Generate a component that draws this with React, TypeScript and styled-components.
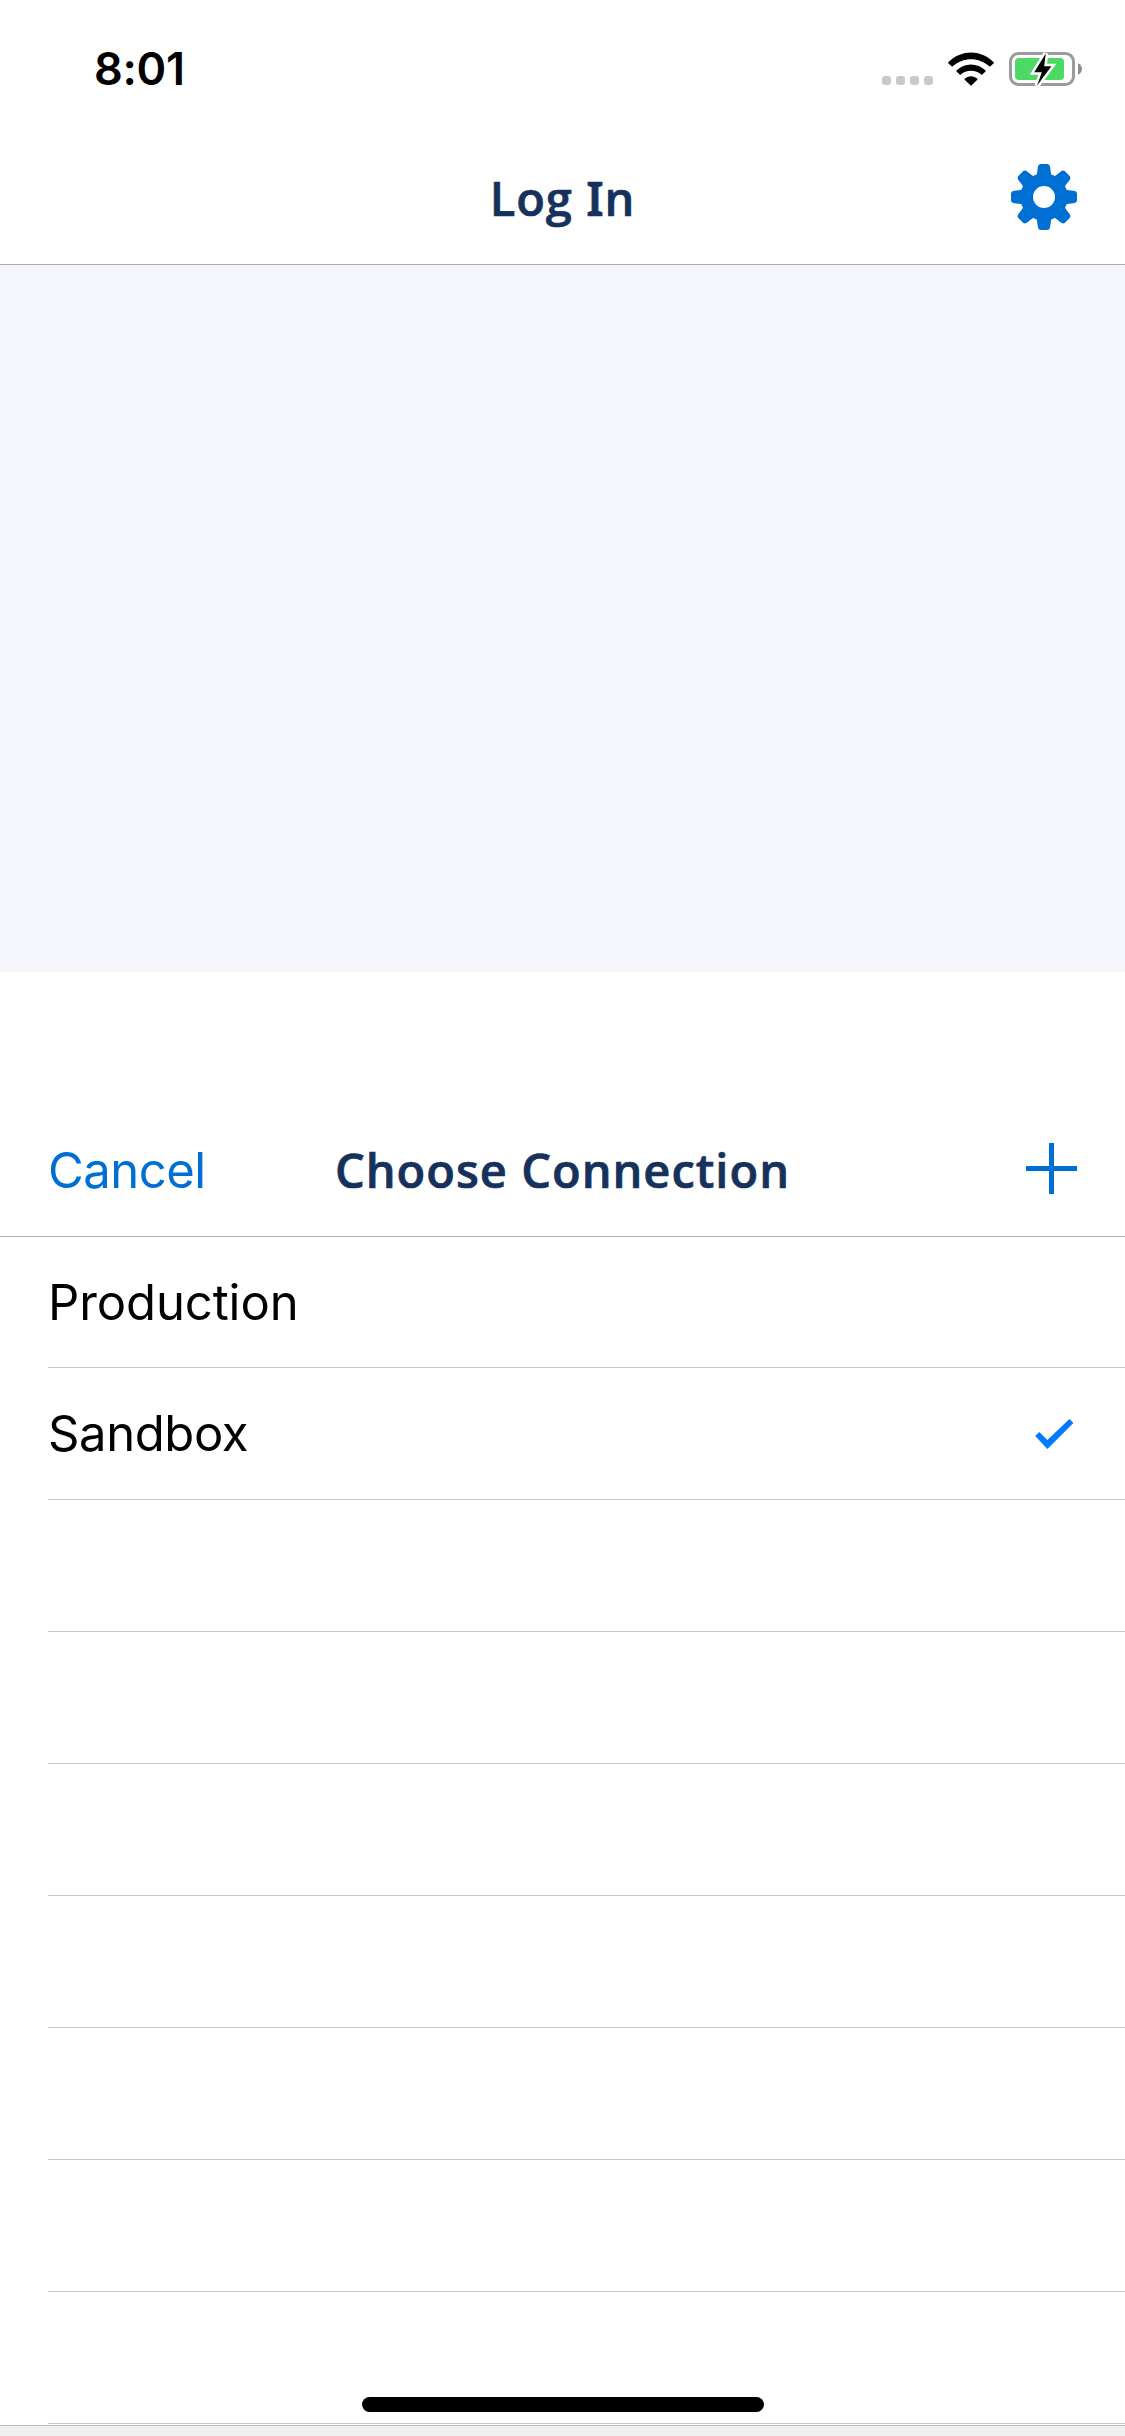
import React from "react";
import styled, { createGlobalStyle } from "styled-components";

const GlobalStyle = createGlobalStyle`
  *, *::before, *::after { box-sizing: border-box; }
  body { margin: 0; background: #fff; }
`;

const blue = "#006fd4";
const navy = "#16325c";

const Screen = styled.div`
  position: relative;
  display: flex;
  flex-direction: column;
  width: 1125px;
  height: 2436px;
  overflow: hidden;
  background: #fff;
  font-family: Inter, "Liberation Sans", sans-serif;
`;

const StatusBar = styled.header`
  display: flex;
  justify-content: space-between;
  height: 132px;
  padding: 42px 43px 0 94px;
`;

const Time = styled.time`
  height: 54px;
  line-height: 54px;
  font-size: 45px;
  font-weight: 600;
  letter-spacing: -0.3px;
  color: #000;
`;

const Indicators = styled.div`
  display: flex;
  align-items: flex-end;
  height: 44px;
`;

const Dots = styled.div`
  display: flex;
  gap: 5px;
  margin: 0 15px 1px 0;
`;

const Dot = styled.span`
  width: 9px;
  height: 9px;
  border-radius: 3px;
  background: #c9c9c9;
`;

const NavBar = styled.div<{ $line: string }>`
  display: grid;
  grid-template-columns: 1fr auto 1fr;
  align-items: center;
  flex: none;
  height: 133px;
  padding: 0 48px;
  border-bottom: 1px solid ${(p) => p.$line};
`;

const Title = styled.h1<{ $spacing: number }>`
  grid-column: 2;
  margin: 0;
  line-height: 64px;
  font-family: "Open Sans", "Noto Sans", sans-serif;
  font-size: 47px;
  font-weight: 600;
  letter-spacing: ${(p) => p.$spacing}px;
  white-space: nowrap;
  color: ${navy};
  -webkit-text-stroke: 0.7px ${navy};
`;

const SlabLetter = styled.span`
  font-family: "Noto Sans", sans-serif;
`;

const NavButton = styled.button<{ $side: "start" | "end"; $lift?: number }>`
  grid-column: ${(p) => (p.$side === "start" ? 1 : 3)};
  grid-row: 1;
  justify-self: ${(p) => p.$side};
  display: flex;
  padding: 0 0 ${(p) => p.$lift ?? 0}px;
  border: 0;
  background: none;
  font-family: inherit;
  font-size: 49px;
  letter-spacing: -0.5px;
  color: ${blue};
`;

const Backdrop = styled.main`
  flex: none;
  height: 707px;
  background: #f4f6fb;
`;

const Sheet = styled.section`
  display: flex;
  flex-direction: column;
  flex: none;
  padding-top: 132px;
  background: #fff;
`;

const List = styled.ul`
  margin: 0;
  padding: 0 0 0 48px;
  list-style: none;
`;

const Row = styled.li<{ $spacing: number }>`
  display: flex;
  align-items: center;
  justify-content: space-between;
  height: 132px;
  padding: 0 51px 0 0;
  border-bottom: 1px solid #c8c7cc;
  font-size: 49px;
  letter-spacing: ${(p) => p.$spacing}px;
  color: #000;

  &:first-child { height: 131px; }
`;

const BottomBar = styled.footer`
  flex: 1;
  margin-top: 1px;
  border-top: 1px solid #bdbdbd;
  background: #efeff0;
`;

const HomeIndicator = styled.div`
  position: absolute;
  left: 362px;
  bottom: 24px;
  width: 402px;
  height: 15px;
  border-radius: 8px;
  background: #000;
`;

const Wifi = styled.svg`
  margin-right: 15px;
`;

const WifiIcon = () => (
  <Wifi width="46" height="34" viewBox="0 0 46 34">
    <path d="M0.3 10.2C13-2.9 33-2.9 45.7 10.2Q46 10.8 45.5 11.4L41.8 14.8C31 4.7 15 4.7 4.2 14.8L0.5 11.4Q0 10.8 0.3 10.2Z" />
    <path d="M8.4 18.5C16.7 10.4 29.3 10.4 37.6 18.5Q38 19 37.5 19.6L33.8 23C27.4 17.4 18.6 17.4 12.2 23L8.5 19.6Q8 19 8.4 18.5Z" />
    <path d="M16.6 26.7C20.3 23.3 25.7 23.3 29.4 26.7Q29.8 27.2 29.3 27.7L23.6 33.2Q23 33.7 22.4 33.2L16.7 27.7Q16.2 27.2 16.6 26.7Z" />
  </Wifi>
);

const BOLT = "M36.8 1.5L25.2 20.2H32.8L28 33.8L42.4 14.3H35.2Z";

const BatteryIcon = () => (
  <svg width="73" height="34" viewBox="0 0 73 34">
    <rect x="1.5" y="1.5" width="63" height="31" rx="8" fill="none" stroke="#9b9b9b" strokeWidth="3" />
    <rect x="6" y="6" width="49" height="22" rx="4" fill="#4cd964" />
    <path d="M69 11.3Q73 13.2 73 17T69 22.7Z" fill="#8e8e8e" />
    <path d={BOLT} fill="#fff" stroke="#fff" strokeWidth="5" />
    <path d={BOLT} fill="#000" />
  </svg>
);

const TOOTH =
  "M-9-21.6C-7.6-21.6-6.9-23-6.8-24.8L-6.2-29.5Q-5.8-33-3-33H3Q5.8-33 6.2-29.5L6.8-24.8C6.9-23 7.6-21.6 9-21.6V-14H-9Z";

const GearIcon = () => (
  <svg width="66" height="66" viewBox="-33 -33 66 66">
    {[0, 45, 90, 135, 180, 225, 270, 315].map((angle) => (
      <path key={angle} d={TOOTH} fill={blue} transform={`rotate(${angle})`} />
    ))}
    <circle r="17.2" fill="none" stroke={blue} strokeWidth="12.4" />
  </svg>
);

const PlusIcon = () => (
  <svg width="51" height="51" viewBox="0 0 51 51">
    <path d="M23 0H28V23H51V28H28V51H23V28H0V23H23Z" fill={blue} />
  </svg>
);

const CheckIcon = () => (
  <svg width="39" height="30" viewBox="0 0 39 30">
    <path d="M0.2 17L4.3 13L12.4 21L34.4 0L38.4 4L12.4 30Z" fill="#007aff" />
  </svg>
);

const connections = [
  { name: "Production", spacing: -0.1 },
  { name: "Sandbox", spacing: -0.4 },
  ...Array.from({ length: 7 }, () => ({ name: "", spacing: 0 })),
];

export default function App() {
  const [selected, setSelected] = React.useState("Sandbox");

  return (
    <Screen>
      <GlobalStyle />
      <StatusBar>
        <Time>8:01</Time>
        <Indicators>
          <Dots>
            <Dot />
            <Dot />
            <Dot />
            <Dot />
          </Dots>
          <WifiIcon />
          <BatteryIcon />
        </Indicators>
      </StatusBar>
      <NavBar $line="#a9abb0">
        <Title $spacing={1}>
          Log <SlabLetter>I</SlabLetter>n
        </Title>
        <NavButton $side="end" $lift={2} aria-label="Settings">
          <GearIcon />
        </NavButton>
      </NavBar>
      <Backdrop />
      <Sheet>
        <NavBar $line="#b2b2b2">
          <NavButton $side="start">Cancel</NavButton>
          <Title $spacing={1}>Choose Connection</Title>
          <NavButton $side="end" $lift={3} aria-label="Add connection">
            <PlusIcon />
          </NavButton>
        </NavBar>
        <List>
          {connections.map(({ name, spacing }, i) => (
            <Row key={i} $spacing={spacing} onClick={() => name && setSelected(name)}>
              {name}
              {name !== "" && name === selected && <CheckIcon />}
            </Row>
          ))}
        </List>
      </Sheet>
      <BottomBar />
      <HomeIndicator />
    </Screen>
  );
}
